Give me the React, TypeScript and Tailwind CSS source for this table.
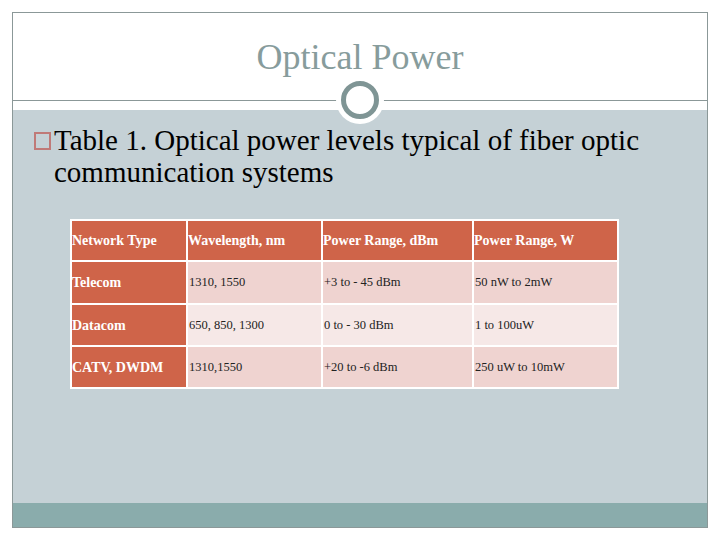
import React from "react";

const rows = [
  ["Telecom", "1310, 1550", "+3 to - 45 dBm", "50 nW to 2mW"],
  ["Datacom", "650, 850, 1300", "0 to - 30 dBm", "1 to 100uW"],
  ["CATV, DWDM", "1310,1550", "+20 to -6 dBm", "250 uW to 10mW"],
];

export default function App() {
  const serif = { fontFamily: '"Liberation Serif", "Times New Roman", serif' };
  return (
    <div className="w-[720px] h-[540px] bg-white pt-[12px] pl-[12px]" style={serif}>
      <div className="relative w-[696px] h-[516px] border border-[#8b9898] flex flex-col">
        {/* title area */}
        <div className="h-[87px] flex items-start justify-center pt-[22px]">
          <div className="text-[36px] leading-[44px] text-[#879c9c]">Optical Power</div>
        </div>
        <div className="h-[1px] bg-[#8b9898]" />
        <div className="h-[9px] bg-white" />
        {/* circle ornament */}
        <div className="absolute left-[323px] top-[63px] w-[48px] h-[48px] rounded-full bg-white flex items-center justify-center">
          <div className="w-[38px] h-[38px] rounded-full border-[5px] border-[#7f9595] bg-white" />
        </div>
        {/* body */}
        <div className="flex-1 bg-[#c5d1d6] pt-[14px]">
          <div className="flex pl-[21px] text-[29px] leading-[32px] text-black">
            <span className="mt-[8px] mr-[3px] w-[17px] h-[18px] border-2 border-[#c07a78] shrink-0" />
            <div className="w-[620px]">
              Table 1. Optical power levels typical of fiber optic communication systems
            </div>
          </div>
          <div className="ml-[57px] mt-[31px] w-[549px] grid grid-cols-[114px_133px_149px_143px] grid-rows-[39px_41px_40px_40px] gap-[2px] p-[2px] bg-white text-[14px]">
            {["Network Type", "Wavelength, nm", "Power Range, dBm", "Power Range, W"].map((h) => (
              <div key={h} className="bg-[#cf6449] text-white font-bold flex items-center">
                {h}
              </div>
            ))}
            {rows.map((r, i) => (
              <React.Fragment key={i}>
                <div className="bg-[#cf6449] text-white font-bold flex items-center">{r[0]}</div>
                {r.slice(1).map((c, j) => (
                  <div
                    key={j}
                    className={`${i === 1 ? "bg-[#f6e8e7]" : "bg-[#efd3d0]"} text-[#222] flex items-center pl-[1px] text-[12.5px]`}
                  >
                    {c}
                  </div>
                ))}
              </React.Fragment>
            ))}
          </div>
        </div>
        <div className="h-[24px] bg-[#8aacac]" />
      </div>
    </div>
  );
}
